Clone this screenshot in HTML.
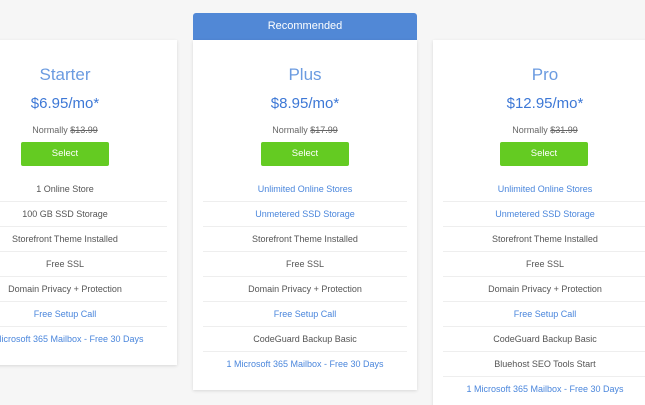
<!DOCTYPE html>
<html><head><style>
html,body{margin:0;width:645px;height:405px;overflow:hidden}
body{background:#f6f6f6;font-family:"Liberation Sans",sans-serif;position:relative}
.card{position:absolute;background:#fff;width:224px;box-shadow:0 1px 3px rgba(0,0,0,.12);text-align:center}
.rec{position:absolute;left:193px;top:13px;width:224px;height:27px;background:#5188d6;color:#fff;font-size:11px;line-height:27px;text-align:center;border-radius:3px 3px 0 0}
h2{font-weight:normal;color:#6b9be0;font-size:17px;margin:0;position:absolute;top:25px;width:100%}
.price{position:absolute;top:55px;width:100%;color:#3d78d6;font-size:15px}
.norm{position:absolute;top:85px;width:100%;color:#666;font-size:9px}
.norm s{color:#666}
.btn{position:absolute;top:102px;left:68px;width:88px;height:24px;background:#64cb22;color:#fff;font-size:9.5px;line-height:24px;border-radius:2px}
ul{list-style:none;margin:0;padding:0;position:absolute;top:137px;left:10px;right:10px}
li{height:24px;line-height:24px;font-size:9px;color:#555;border-bottom:1px solid #eee}
li:last-child{border-bottom:none}
li.b{color:#4a86dc}
</style></head><body>
<div class="card" style="left:-47px;top:40px;height:325px">
<h2>Starter</h2><div class="price">$6.95/mo*</div><div class="norm">Normally <s>$13.99</s></div><div class="btn">Select</div>
<ul><li>1 Online Store</li><li>100 GB SSD Storage</li><li>Storefront Theme Installed</li><li>Free SSL</li><li>Domain Privacy + Protection</li><li class="b">Free Setup Call</li><li class="b">1 Microsoft 365 Mailbox - Free 30 Days</li></ul>
</div>
<div class="rec">Recommended</div>
<div class="card" style="left:193px;top:40px;height:350px">
<h2>Plus</h2><div class="price">$8.95/mo*</div><div class="norm">Normally <s>$17.99</s></div><div class="btn">Select</div>
<ul><li class="b">Unlimited Online Stores</li><li class="b">Unmetered SSD Storage</li><li>Storefront Theme Installed</li><li>Free SSL</li><li>Domain Privacy + Protection</li><li class="b">Free Setup Call</li><li>CodeGuard Backup Basic</li><li class="b">1 Microsoft 365 Mailbox - Free 30 Days</li></ul>
</div>
<div class="card" style="left:433px;top:40px;height:380px">
<h2>Pro</h2><div class="price">$12.95/mo*</div><div class="norm">Normally <s>$31.99</s></div><div class="btn" style="left:67px">Select</div>
<ul><li class="b">Unlimited Online Stores</li><li class="b">Unmetered SSD Storage</li><li>Storefront Theme Installed</li><li>Free SSL</li><li>Domain Privacy + Protection</li><li class="b">Free Setup Call</li><li>CodeGuard Backup Basic</li><li>Bluehost SEO Tools Start</li><li class="b">1 Microsoft 365 Mailbox - Free 30 Days</li></ul>
</div>
</body></html>
